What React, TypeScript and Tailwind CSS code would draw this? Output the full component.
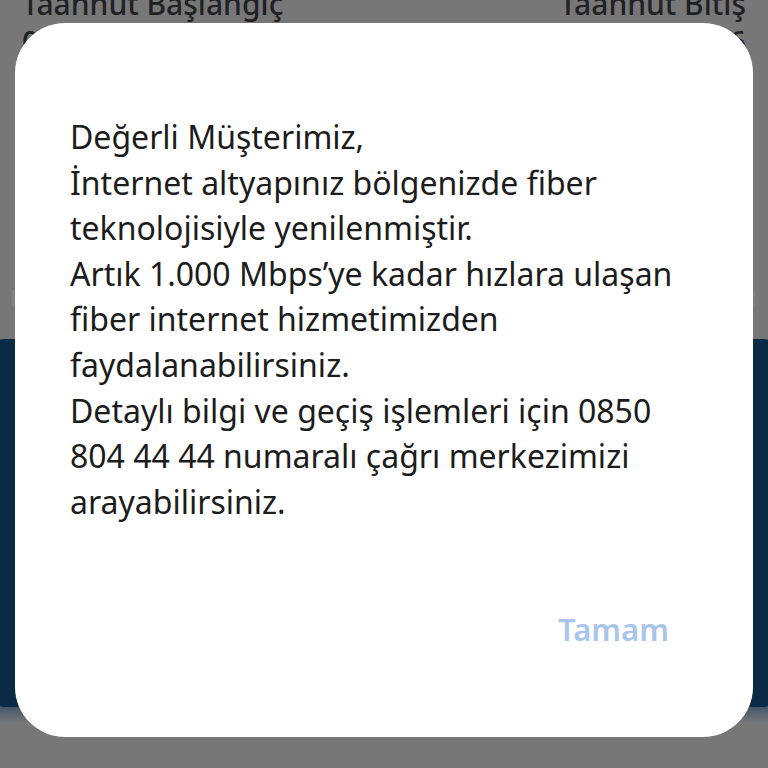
export default function App() {
  const lines = [
    'Değerli Müşterimiz,',
    'İnternet altyapınız bölgenizde fiber',
    'teknolojisiyle yenilenmiştir.',
    'Artık 1.000 Mbps’ye kadar hızlara ulaşan',
    'fiber internet hizmetimizden',
    'faydalanabilirsiniz.',
    'Detaylı bilgi ve geçiş işlemleri için 0850',
    '804 44 44 numaralı çağrı merkezimizi',
    'arayabilirsiniz.',
  ];

  return (
    <div className="relative h-[768px] w-full overflow-hidden bg-[#777777] font-['Noto_Sans',sans-serif]">
      {/* page behind the dim layer */}
      <div className="flex h-full flex-col">
        <div className="-mt-[15px] flex justify-between px-[22px] text-[30px] leading-[38px] font-medium text-[#1f2124]">
          <div>
            <div>Taahhut Başlangıç</div>
            <div>01.09.2023</div>
          </div>
          <div className="text-right">
            <div>Taahhut Bitiş</div>
            <div>01.09.2026</div>
          </div>
        </div>
        <div className="ml-[12px] mr-[12px] mt-[229px] h-[16px] border-l border-[#858585] bg-[#7c7c7c]" />
        <div className="mx-[-24px] mt-[33px] h-[368px] rounded-[30px] bg-[#0b2a46]" />
        <div className="h-[16px] bg-gradient-to-b from-[#43566a] to-[#777777]" />
      </div>

      {/* dialog */}
      <div className="absolute inset-0 flex items-start justify-center pt-[23px]">
        <div className="flex h-[714px] w-[738px] flex-col rounded-[50px] bg-white pl-[55px] pr-[84px] pt-[91px]">
          <div className="text-[32px] leading-[45.6px] text-[#1c1c1c]">
            {lines.map((l) => (
              <div key={l} className="whitespace-nowrap">
                {l}
              </div>
            ))}
          </div>
          <div className="mt-[85px] flex justify-end">
            <button className="text-[31px] font-semibold leading-[40px] text-[#a9c5ec]">Tamam</button>
          </div>
        </div>
      </div>
    </div>
  );
}
